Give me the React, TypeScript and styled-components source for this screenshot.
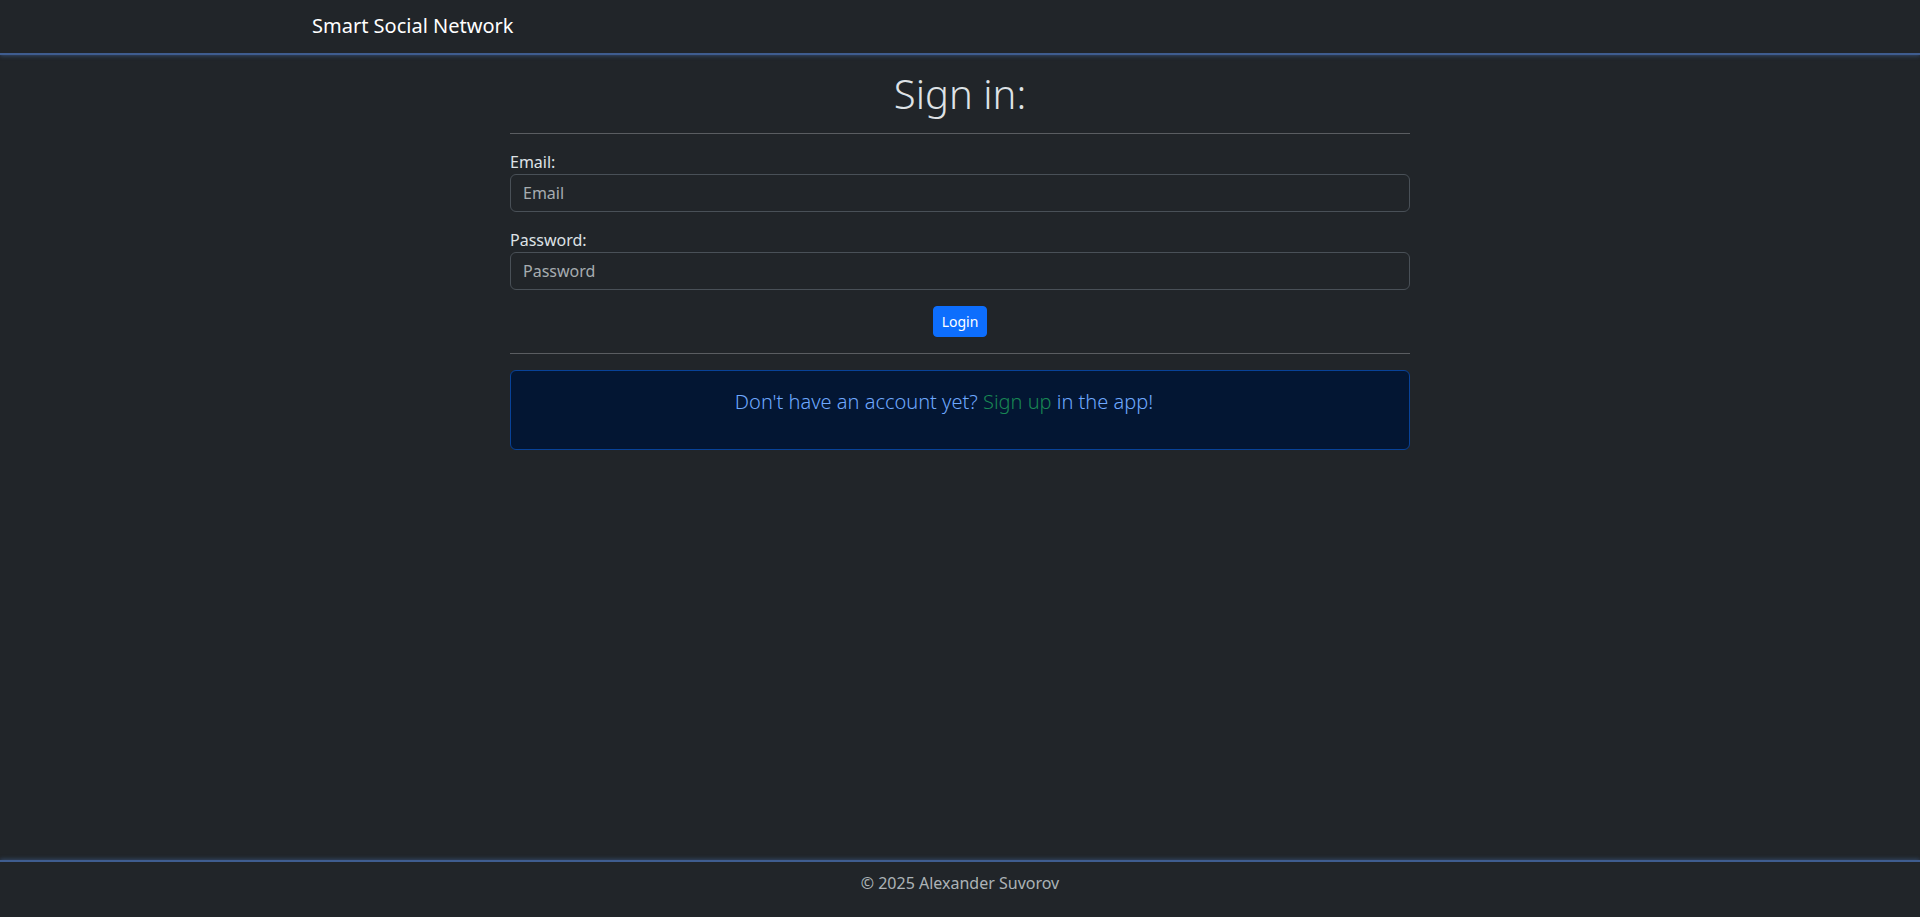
import React from "react";
import styled, { createGlobalStyle } from "styled-components";

const GlobalStyle = createGlobalStyle`
  *, *::before, *::after { box-sizing: border-box; }
  html, body { margin: 0; padding: 0; }
  body {
    background: #212529;
    color: #dee2e6;
    font-family: "Noto Sans", "Open Sans", "Liberation Sans", sans-serif;
    font-size: 16px;
    line-height: 1.5;
  }
`;

const Page = styled.div`
  min-height: 100vh;
  display: flex;
  flex-direction: column;
`;

const Header = styled.header`
  height: 55px;
  padding-top: 11px;
  background: #212529;
  border-bottom: 2px solid #3f5d8f;
  box-shadow: 0 1px 4px rgba(70, 110, 170, 0.45), 0 -1px 3px rgba(70, 110, 170, 0.25);
`;

const Container = styled.div`
  max-width: 1320px;
  margin: 0 auto;
  padding: 0 12px;
`;

const Brand = styled.a`
  color: #fff;
  font-size: 20px;
  line-height: 30px;
  text-decoration: none;
`;

const Main = styled.main`
  flex: 1;
  padding-top: 15px;
`;

const Panel = styled.div`
  width: 900px;
  margin: 0 auto;
`;

const Title = styled.h1`
  margin: 0;
  font-size: 40px;
  line-height: 48px;
  font-weight: 300;
  text-align: center;
  color: #dee2e6;
`;

const Rule = styled.hr<{ $top?: number }>`
  margin: ${(p) => p.$top ?? 16}px 0 16px;
  border: 0;
  border-top: 1px solid rgba(222, 226, 230, 0.3);
`;

const Field = styled.div`
  margin-bottom: 16px;
`;

const Label = styled.label`
  display: block;
  font-size: 16px;
  line-height: 24px;
  color: #dee2e6;
`;

const Input = styled.input`
  display: block;
  width: 100%;
  height: 38px;
  padding: 6px 12px;
  font-family: inherit;
  font-size: 16px;
  line-height: 24px;
  color: #dee2e6;
  background: #212529;
  border: 1px solid #495057;
  border-radius: 6px;
  outline: none;
  &::placeholder { color: rgba(222, 226, 230, 0.72); }
`;

const Actions = styled.div`
  display: flex;
  justify-content: center;
`;

const Button = styled.button`
  font-family: inherit;
  font-size: 14px;
  line-height: 21px;
  padding: 4px 8px;
  color: #fff;
  background: #0d6efd;
  border: 1px solid #0d6efd;
  border-radius: 4px;
  cursor: pointer;
`;

const Alert = styled.div`
  padding: 16px 48px 16px 16px;
  background: #031633;
  border: 1px solid #084298;
  border-radius: 6px;
  color: #6ea8fe;
  text-align: center;
`;

const Lead = styled.p`
  margin: 0 0 16px;
  font-size: 20px;
  line-height: 30px;
  font-weight: 300;
`;

const SignUp = styled.a`
  color: #198754;
  text-decoration: none;
`;

const Footer = styled.footer`
  height: 57px;
  padding-top: 9px;
  text-align: center;
  color: rgba(222, 226, 230, 0.75);
  border-top: 2px solid #3f5d8f;
  box-shadow: 0 -1px 4px rgba(70, 110, 170, 0.45);
`;

export default function App() {
  return (
    <Page>
      <GlobalStyle />
      <Header>
        <Container>
          <Brand href="#">Smart Social Network</Brand>
        </Container>
      </Header>
      <Main>
        <Panel>
          <Title>Sign in:</Title>
          <Rule $top={15} />
          <form onSubmit={(e) => e.preventDefault()}>
            <Field>
              <Label htmlFor="email">Email:</Label>
              <Input id="email" type="email" placeholder="Email" />
            </Field>
            <Field>
              <Label htmlFor="password">Password:</Label>
              <Input id="password" type="password" placeholder="Password" />
            </Field>
            <Actions>
              <Button type="submit">Login</Button>
            </Actions>
          </form>
          <Rule />
          <Alert>
            <Lead>
              Don't have an account yet? <SignUp href="#">Sign up</SignUp> in the app!
            </Lead>
          </Alert>
        </Panel>
      </Main>
      <Footer>© 2025 Alexander Suvorov</Footer>
    </Page>
  );
}
